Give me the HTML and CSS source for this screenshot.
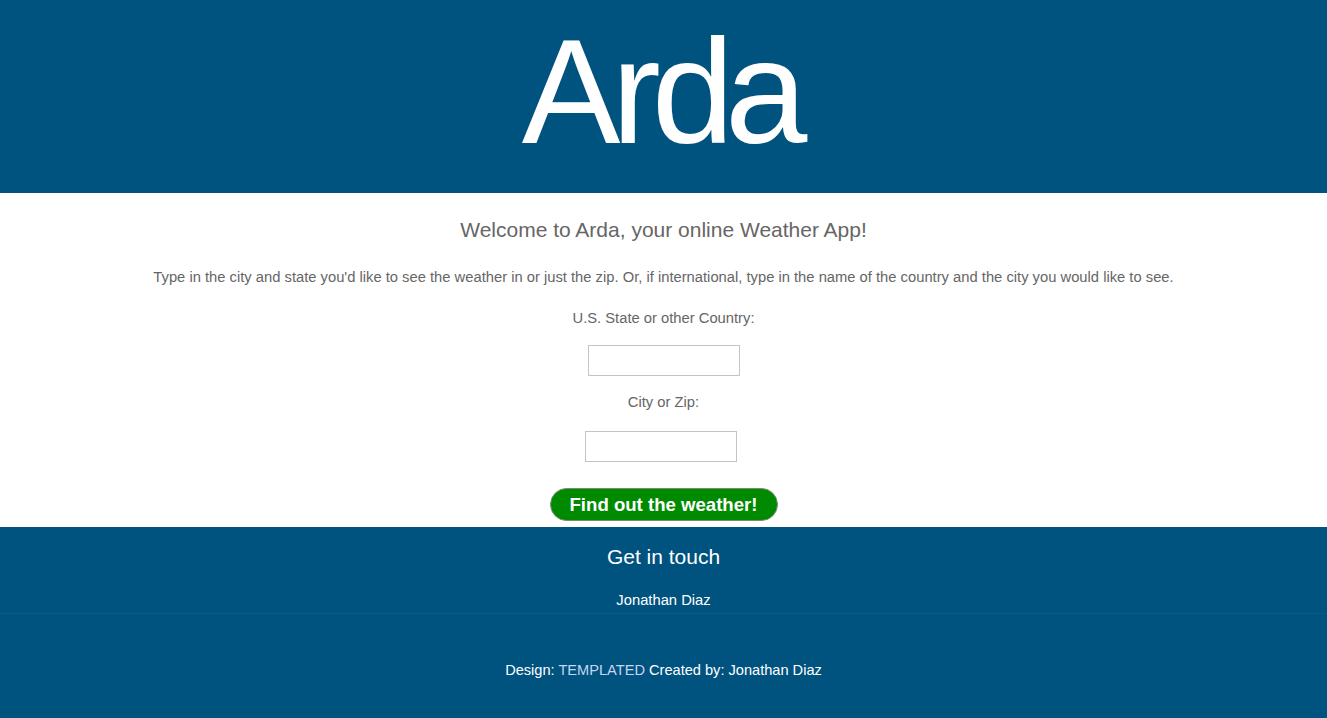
FILE: index.html
```html
<!DOCTYPE html>
<html lang="en">
<head>
<meta charset="utf-8">
<title>Arda</title>
<link rel="stylesheet" href="styles.css">
</head>
<body>
<header class="banner">
  <h1 class="logo">Arda</h1>
</header>
<main class="main">
  <h2 class="welcome">Welcome to Arda, your online Weather App!</h2>
  <p class="intro">Type in the city and state you'd like to see the weather in or just the zip. Or, if international, type in the name of the country and the city you would like to see.</p>
  <form class="form">
    <label class="label">U.S. State or other Country:</label>
    <input class="field field-a" type="text">
    <label class="label label-b">City or Zip:</label>
    <input class="field field-b" type="text">
    <button class="btn" type="button">Find out the weather!</button>
  </form>
</main>
<footer class="footer">
  <div class="contact">
    <h3 class="touch">Get in touch</h3>
    <p class="name">Jonathan Diaz</p>
  </div>
  <div class="copyright">
    Design: <a class="link" href="#">TEMPLATED</a> Created by: Jonathan Diaz
  </div>
</footer>
</body>
</html>
```
FILE: styles.css
```css
html, body {
  margin: 0;
  padding: 0;
}
body {
  font-family: "Liberation Sans", Arial, Helvetica, sans-serif;
  color: #666;
  background: #fff;
}
.banner {
  background: #00527f;
  height: 193px;
  box-sizing: border-box;
  padding-top: 18px;
  text-align: center;
}
.logo {
  margin: 0;
  padding-right: 7px;
  font-size: 148px;
  line-height: 148px;
  font-weight: normal;
  color: #fff;
  letter-spacing: -9px;
}
.main {
  text-align: center;
  padding-top: 22px;
  padding-bottom: 6px;
}
.welcome {
  margin: 0;
  font-size: 21px;
  line-height: 30px;
  font-weight: normal;
  color: #666;
}
.intro {
  margin: 22px 0 0;
  font-size: 14.75px;
  line-height: 20px;
}
.form {
  display: flex;
  flex-direction: column;
  align-items: center;
}
.label {
  margin-top: 21px;
  font-size: 14.75px;
  line-height: 20px;
}
.label-b {
  margin-top: 16px;
}
.field {
  box-sizing: border-box;
  width: 152px;
  height: 31px;
  margin-top: 17px;
  border: 1px solid #c4c4c4;
  background: #fff;
  padding: 0 6px;
}
.field-a {
  margin-left: 1px;
}
.field-b {
  margin-top: 19px;
  margin-left: -5px;
}
.btn {
  margin-top: 26px;
  width: 228px;
  height: 33px;
  border-radius: 17px;
  border: 1px solid #7a8a7a;
  background: #008a00;
  color: #fff;
  font-family: "Liberation Sans", Arial, sans-serif;
  font-weight: bold;
  font-size: 18.6px;
  line-height: 31px;
  padding: 0;
}
.footer {
  background: #00527f;
  color: #fff;
  text-align: center;
}
.contact {
  padding-top: 15px;
  padding-bottom: 3px;
  border-bottom: 1px solid #0a5a86;
}
.touch {
  margin: 0;
  font-size: 21px;
  line-height: 30px;
  font-weight: normal;
}
.name {
  margin: 18px 0 0;
  font-size: 14.75px;
  line-height: 20px;
}
.copyright {
  padding-top: 46px;
  height: 58px;
  font-size: 14.6px;
  line-height: 20px;
  color: #fff;
}
.link {
  color: #c8d4f0;
  text-decoration: none;
}
```
